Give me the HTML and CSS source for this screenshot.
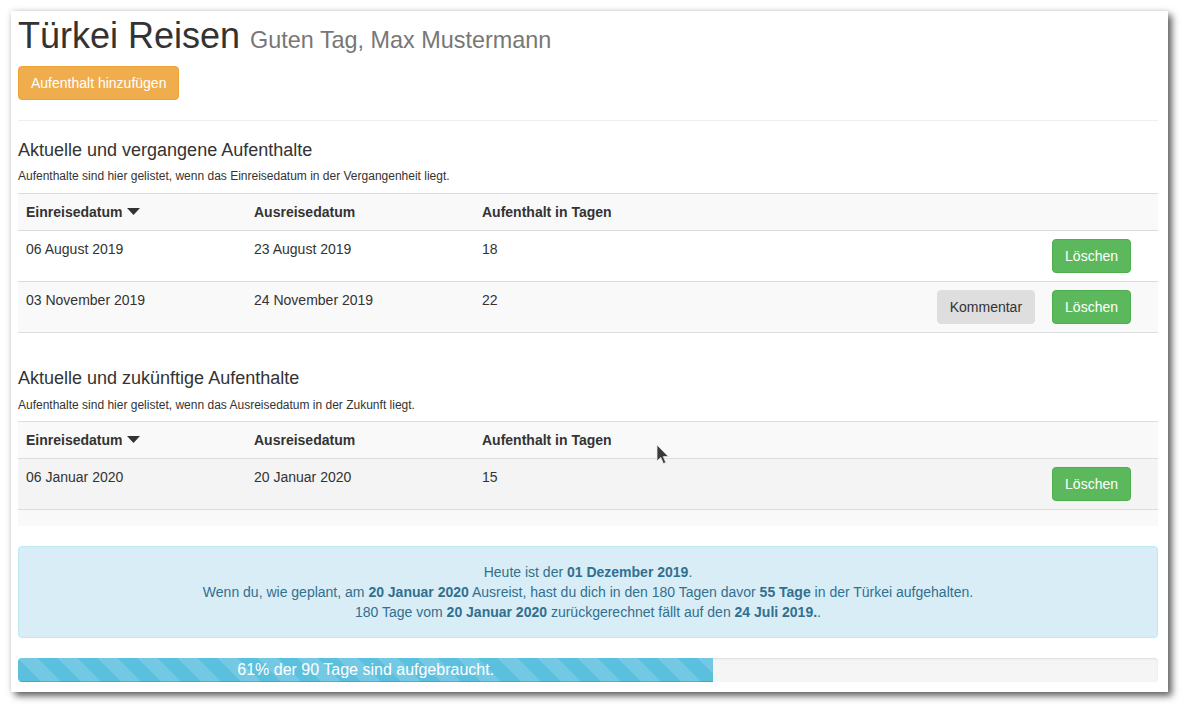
FILE: index.html
```html
<!DOCTYPE html>
<html lang="de">
<head>
<meta charset="utf-8">
<title>Türkei Reisen</title>
<link rel="stylesheet" href="styles.css">
</head>
<body>
<div class="window">
  <h1 class="title">Türkei Reisen <small>Guten Tag, Max Mustermann</small></h1>
  <button class="btn btn-warning">Aufenthalt hinzufügen</button>
  <hr class="divider">

  <h4 class="section-title">Aktuelle und vergangene Aufenthalte</h4>
  <p class="section-note section-note-first">Aufenthalte sind hier gelistet, wenn das Einreisedatum in der Vergangenheit liegt.</p>
  <table class="stays">
    <thead>
      <tr class="head-row">
        <th>Einreisedatum <svg class="caret" width="13" height="7" viewBox="0 0 13 7"><path d="M0 0 H13 L6.5 7 Z" fill="#333"/></svg></th>
        <th>Ausreisedatum</th>
        <th>Aufenthalt in Tagen</th>
        <th></th>
        <th></th>
      </tr>
    </thead>
    <tbody>
      <tr class="row-white">
        <td>06 August 2019</td>
        <td>23 August 2019</td>
        <td>18</td>
        <td></td>
        <td class="actions"><div class="action-wrap"><button class="btn btn-success">Löschen</button></div></td>
      </tr>
      <tr class="row-gray">
        <td>03 November 2019</td>
        <td>24 November 2019</td>
        <td>22</td>
        <td></td>
        <td class="actions"><div class="action-wrap"><button class="btn btn-light">Kommentar</button><button class="btn btn-success">Löschen</button></div></td>
      </tr>
    </tbody>
    <tfoot>
      <tr class="strip strip-white"><td></td><td></td><td></td><td></td><td></td></tr>
    </tfoot>
  </table>

  <h4 class="section-title">Aktuelle und zukünftige Aufenthalte</h4>
  <p class="section-note">Aufenthalte sind hier gelistet, wenn das Ausreisedatum in der Zukunft liegt.</p>
  <table class="stays">
    <thead>
      <tr class="head-row">
        <th>Einreisedatum <svg class="caret" width="13" height="7" viewBox="0 0 13 7"><path d="M0 0 H13 L6.5 7 Z" fill="#333"/></svg></th>
        <th>Ausreisedatum</th>
        <th>Aufenthalt in Tagen</th>
        <th></th>
        <th></th>
      </tr>
    </thead>
    <tbody>
      <tr class="row-hover">
        <td>06 Januar 2020</td>
        <td>20 Januar 2020</td>
        <td>15</td>
        <td></td>
        <td class="actions"><div class="action-wrap"><button class="btn btn-success">Löschen</button></div></td>
      </tr>
    </tbody>
    <tfoot>
      <tr class="strip strip-gray"><td></td><td></td><td></td><td></td><td></td></tr>
    </tfoot>
  </table>

  <div class="alert-info">
    Heute ist der <b>01 Dezember 2019</b>.<br>
    Wenn du, wie geplant, am <b>20 Januar 2020</b> Ausreist, hast du dich in den 180 Tagen davor <b>55 Tage</b> in der Türkei aufgehalten.<br>
    180 Tage vom <b>20 Januar 2020</b> zurückgerechnet fällt auf den <b>24 Juli 2019.</b>.
  </div>

  <div class="progress">
    <div class="progress-bar" style="width: 61%">61% der 90 Tage sind aufgebraucht.</div>
  </div>

  <svg class="cursor" width="14" height="22" viewBox="0 0 14 22"><path d="M1 1 L1 17 L4.8 13.4 L7.4 19.6 L9.8 18.6 L7.3 12.6 L12.4 12.6 Z" fill="#3a3a3a" stroke="#e8e8e8" stroke-width="0.8" stroke-linejoin="round"/></svg>
</div>
</body>
</html>
```
FILE: styles.css
```css
* { box-sizing: border-box; }

html, body {
  margin: 0;
  padding: 0;
  background: #ffffff;
}

html { min-height: 711px; }

body {
  font-family: "Liberation Sans", Arial, sans-serif;
  font-size: 14px;
  line-height: 1.42857;
  color: #333333;
  padding: 11px 0 19px 11px;
}

.window {
  position: relative;
  width: 1157px;
  height: 681px;
  background: #ffffff;
  padding: 5px 10px 10px 7px;
  box-shadow: 4px 4px 7px rgba(0, 0, 0, 0.6), 0 0 6px rgba(0, 0, 0, 0.12);
}

.title {
  margin: 0 0 10px 0;
  font-size: 36px;
  font-weight: 400;
  line-height: 1.1;
  color: #333333;
}

.title small {
  font-size: 65%;
  color: #777777;
  font-weight: 400;
}

.btn {
  display: inline-block;
  font-family: inherit;
  font-size: 14px;
  line-height: 20px;
  height: 34px;
  padding: 6px 12px;
  border: 1px solid transparent;
  border-radius: 4px;
  cursor: pointer;
  white-space: nowrap;
  vertical-align: top;
}

.btn-warning {
  background: #f0ad4e;
  border-color: #eea236;
  color: #ffffff;
}

.btn-success {
  background: #5cb85c;
  border-color: #4cae4c;
  color: #ffffff;
}

.btn-light {
  background: #dedede;
  border-color: #dedede;
  color: #333333;
}

.divider {
  margin: 20px 0;
  border: 0;
  border-top: 1px solid #eeeeee;
  height: 0;
}

.section-title {
  margin: 20px 0 8px 0;
  font-size: 18px;
  font-weight: 400;
  line-height: 1.1;
  color: #333333;
}

.divider + .section-title {
  margin-top: 0;
}

.section-note {
  margin: 0 0 7px 0;
  font-size: 12px;
  line-height: 17px;
}

.section-note-first {
  margin-bottom: 8px;
}

.stays {
  width: 1140px;
  border-collapse: collapse;
  table-layout: fixed;
  margin-bottom: 20px;
}

.stays th,
.stays td {
  width: 228px;
  padding: 8px;
  border-top: 1px solid #dddddd;
  text-align: left;
  vertical-align: top;
  line-height: 20px;
}

.stays th {
  font-weight: 700;
}

.caret {
  margin-left: 1px;
  vertical-align: 2px;
}

.head-row { background: #f9f9f9; }
.row-white { background: #ffffff; }
.row-gray { background: #f9f9f9; }
.row-hover { background: #f4f4f4; }

.stays .strip td {
  padding: 0;
  height: 17px;
}

.stays .strip-white td {
  height: 16px;
}

.strip-white { background: #ffffff; }
.strip-gray { background: #f9f9f9; }

.stays td.actions {
  padding-right: 27px;
}

.action-wrap {
  display: flex;
  justify-content: flex-end;
  gap: 17px;
}

.alert-info {
  margin-bottom: 20px;
  padding: 15px;
  background: #d9edf7;
  border: 1px solid #bce8f1;
  border-radius: 4px;
  color: #31708f;
  text-align: center;
  line-height: 20px;
}

.alert-info b {
  font-weight: 700;
}

.progress {
  height: 24px;
  background: #f5f5f5;
  border-radius: 4px;
  overflow: hidden;
  box-shadow: inset 0 1px 2px rgba(0, 0, 0, 0.1);
}

.progress-bar {
  height: 24px;
  background-color: #5bc0de;
  background-image: linear-gradient(45deg,
    rgba(255, 255, 255, 0.15) 25%, transparent 25%,
    transparent 50%, rgba(255, 255, 255, 0.15) 50%,
    rgba(255, 255, 255, 0.15) 75%, transparent 75%, transparent);
  background-size: 40px 40px;
  color: #ffffff;
  font-size: 16px;
  line-height: 24px;
  text-align: center;
  white-space: nowrap;
  box-shadow: inset 0 -1px 0 rgba(0, 0, 0, 0.15);
}

.cursor {
  position: absolute;
  left: 645px;
  top: 433px;
}
```
